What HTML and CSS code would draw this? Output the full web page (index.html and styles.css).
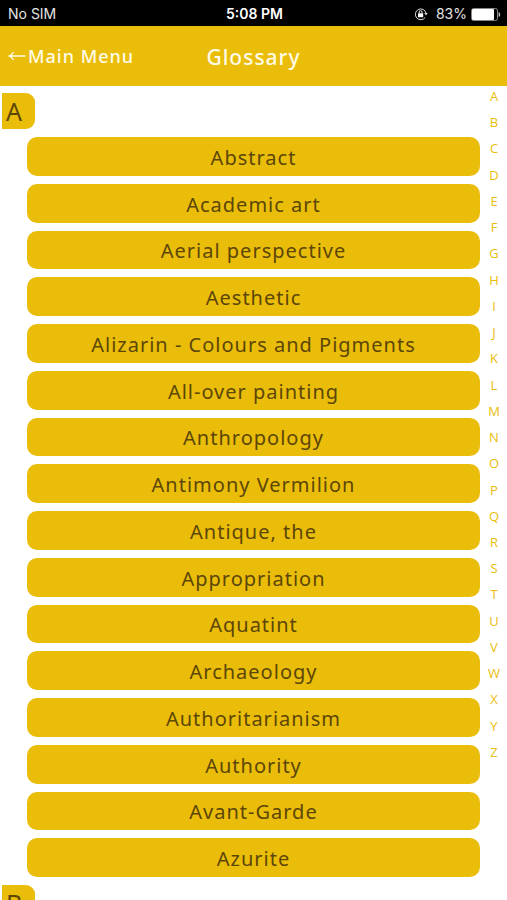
FILE: index.html
```html
<!DOCTYPE html>
<html lang="en">
<head>
<meta charset="utf-8">
<meta name="viewport" content="width=device-width, initial-scale=1">
<title>Glossary</title>
<link rel="stylesheet" href="styles.css">
</head>
<body>
<div class="app">
  <div class="status">
    <span class="carrier">No SIM</span>
    <span class="clock">5:08 PM</span>
    <span class="power">
      <svg class="lock" viewBox="0 0 14 14" width="14" height="14" aria-hidden="true">
        <path d="M11.2 10.4A5.4 5.4 0 1 1 12 6" fill="none" stroke="#ddd" stroke-width="1"/>
        <path d="M10.3 6h3.4L12 8.600z" fill="#ddd"/>
        <rect x="4" y="6.2" width="5.2" height="4" rx=".5" fill="#fff"/>
        <path d="M5.2 6.4V5a1.4 1.4 0 0 1 2.8 0v1.4" fill="none" stroke="#fff" stroke-width=".9"/>
      </svg>
      <span>83%</span>
      <svg class="battery" viewBox="0 0 30 13" width="30" height="13" aria-hidden="true">
        <rect x=".5" y=".5" width="26" height="12" rx="2" fill="none" stroke="#888"/>
        <rect x="1" y="1" width="22" height="11" rx="1" fill="#fff"/>
        <path d="M28 4.500q1.600 2 0 4z" fill="#ddd" stroke="#ddd" stroke-width=".6"/>
      </svg>
    </span>
  </div>
  <header class="bar">
    <a class="back" href="#menu">
      <svg viewBox="0 0 18 12" width="18" height="12" aria-hidden="true"><path d="M17.500 6H1.500M5.500 2Q4 5 1 6Q4 7 5.500 10" fill="none" stroke="currentColor" stroke-width="1.300"/></svg>
      <span>Main Menu</span>
    </a>
    <h1 class="title">Glossary</h1>
  </header>
  <div class="body">
    <main class="glossary">
      <h2 class="letter" id="a">A</h2>
      <ul class="terms">
        <li><button class="term" type="button">Abstract</button></li>
        <li><button class="term" type="button">Academic art</button></li>
        <li><button class="term" type="button">Aerial perspective</button></li>
        <li><button class="term" type="button">Aesthetic</button></li>
        <li><button class="term" type="button">Alizarin - Colours and Pigments</button></li>
        <li><button class="term" type="button">All-over painting</button></li>
        <li><button class="term" type="button">Anthropology</button></li>
        <li><button class="term" type="button">Antimony Vermilion</button></li>
        <li><button class="term" type="button">Antique, the</button></li>
        <li><button class="term" type="button">Appropriation</button></li>
        <li><button class="term" type="button">Aquatint</button></li>
        <li><button class="term" type="button">Archaeology</button></li>
        <li><button class="term" type="button">Authoritarianism</button></li>
        <li><button class="term" type="button">Authority</button></li>
        <li><button class="term" type="button">Avant-Garde</button></li>
        <li><button class="term" type="button">Azurite</button></li>
      </ul>
      <h2 class="letter" id="b">B</h2>
    </main>
    <nav class="index" aria-label="Letters">
      <a href="#a">A</a><a href="#b">B</a><a href="#c">C</a><a href="#d">D</a><a href="#e">E</a><a href="#f">F</a><a href="#g">G</a><a href="#h">H</a><a href="#i">I</a><a href="#j">J</a><a href="#k">K</a><a href="#l">L</a><a href="#m">M</a><a href="#n">N</a><a href="#o">O</a><a href="#p">P</a><a href="#q">Q</a><a href="#r">R</a><a href="#s">S</a><a href="#t">T</a><a href="#u">U</a><a href="#v">V</a><a href="#w">W</a><a href="#x">X</a><a href="#y">Y</a><a href="#z">Z</a>
    </nav>
  </div>
</div>
</body>
</html>
```
FILE: styles.css
```css
* {
  box-sizing: border-box;
}

:root {
  --gold: #eabd0a;
  --ink: #5c4608;
}

body {
  margin: 0;
  background: #fff;
  font-family: "Noto Sans", sans-serif;
}

.app {
  display: flex;
  flex-direction: column;
  height: 100vh;
  overflow: hidden;
}

.status {
  display: grid;
  grid-template-columns: 1fr auto 1fr;
  align-items: center;
  flex: none;
  height: 26px;
  padding: 2px 6px 0 8px;
  background: #000;
  color: #e4e4e4;
  font: 14px/20px Inter, sans-serif;
}

.clock {
  color: #fff;
  font-weight: 600;
}

.power {
  display: flex;
  align-items: center;
  justify-content: flex-end;
  gap: 4px;
}

.lock {
  margin-right: 4px;
}

.bar {
  display: grid;
  grid-template-columns: 1fr auto 1fr;
  align-items: center;
  flex: none;
  height: 60px;
  padding: 0 8px;
  background: var(--gold);
  color: #fffbe6;
}

.back {
  display: flex;
  align-items: center;
  gap: 2px;
  color: inherit;
  font-size: 18px;
  font-weight: 500;
  letter-spacing: 1px;
  text-decoration: none;
}

.title {
  margin: 0;
  padding-top: 2px;
  font-size: 21px;
  font-weight: 500;
  letter-spacing: 1px;
}

.body {
  display: flex;
  flex: 1;
  min-height: 0;
}

.glossary {
  flex: 1;
  overflow-y: auto;
  padding: 7px 0 0 2px;
  scrollbar-width: none;
}

.letter {
  width: 33px;
  margin: 0;
  padding-left: 4px;
  border-radius: 0 9px 9px 0;
  background: var(--gold);
  color: var(--ink);
  font-size: 25px;
  font-weight: 400;
  line-height: 36px;
}

.terms {
  display: grid;
  grid-auto-rows: 1fr;
  gap: 8px;
  min-height: calc(100vh - 160px);
  margin: 8px 0 8px 25px;
  padding: 0;
  list-style: none;
}

.term {
  display: block;
  width: 100%;
  height: 100%;
  padding: 3px 0 0;
  border: 0;
  border-radius: 10px;
  background: var(--gold);
  color: var(--ink);
  font: 20px/28px "Noto Sans", sans-serif;
  letter-spacing: 1px;
}

.index {
  display: flex;
  flex-direction: column;
  justify-content: space-between;
  flex: none;
  width: 27px;
  height: calc(100vh - 225px);
  padding: 1px 0 0 1px;
  font-family: "Open Sans", sans-serif;
  font-size: 13px;
  line-height: 18px;
  text-align: center;
}

.index a {
  color: var(--gold);
  text-decoration: none;
}
```
